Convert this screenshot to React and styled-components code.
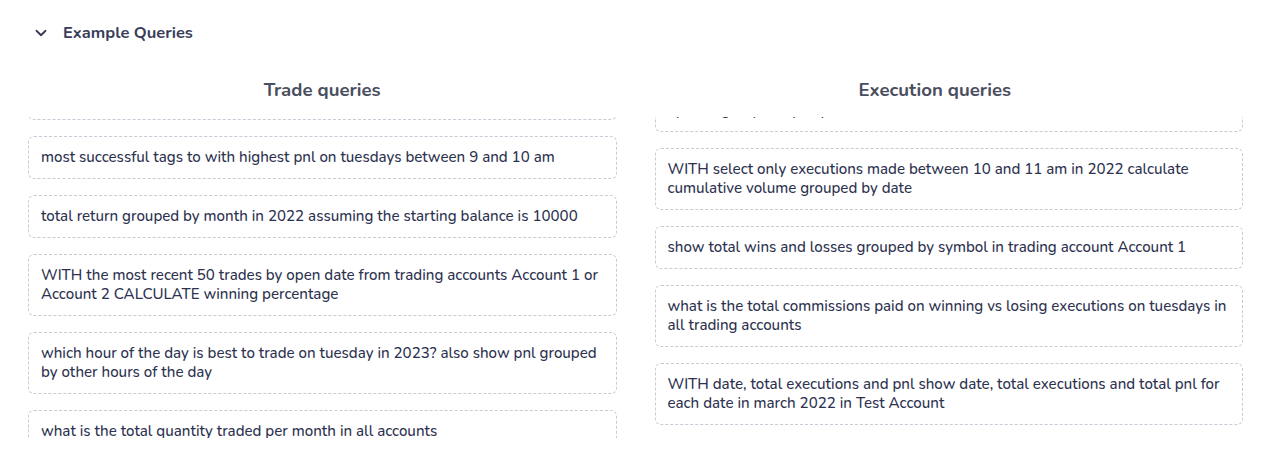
import { useLayoutEffect, useRef } from "react";
import styled, { createGlobalStyle } from "styled-components";
import { ChevronDown } from "lucide-react";

const GlobalStyle = createGlobalStyle`
  * { box-sizing: border-box; }
  body {
    margin: 0;
    background: #fff;
    font-family: "Nunito", "Open Sans", "Noto Sans", sans-serif;
    color: #2d3250;
  }
`;

const Page = styled.div`
  width: 1277px;
  height: 462px;
  padding: 19px 34px 0 28px;
  overflow: hidden;
`;

const Header = styled.button`
  display: flex;
  align-items: center;
  gap: 13px;
  padding: 0 0 0 4px;
  height: 28px;
  border: none;
  background: none;
  font: inherit;
  font-size: 16.5px;
  font-weight: 700;
  line-height: 24px;
  color: #393d5a;
  cursor: pointer;
`;

const Columns = styled.div`
  display: grid;
  grid-template-columns: 1fr 1fr;
  column-gap: 38px;
  margin-top: 31px;
`;

const Column = styled.div`
  display: flex;
  flex-direction: column;
  min-width: 0;
`;

const ColumnTitle = styled.h3`
  margin: 0;
  height: 39px;
  padding-right: ${({ $shift }) => $shift || 0}px;
  text-align: center;
  font-size: 18.6px;
  font-weight: 700;
  line-height: 24px;
  color: #4a4e5e;
`;

const List = styled.div`
  display: flex;
  flex-direction: column;
  gap: 16px;
  height: 321px;
  padding-bottom: 16px;
  overflow-y: auto;
  scrollbar-width: none;
  &::-webkit-scrollbar { display: none; }
`;

const QueryCard = styled.div`
  flex-shrink: 0;
  padding: 11px 12px;
  border: 1px dashed #c6cbd6;
  border-radius: 6px;
  font-size: 15.1px;
  font-weight: 500;
  line-height: 19px;
  color: #2d3250;
  cursor: pointer;
`;

const tradeQueries = [
  "show winning percentage grouped by day of the week in 2023",
  "average pnl grouped by setup in all trading accounts",
  "most successful tags to with highest pnl on tuesdays between 9 and 10 am",
  "total return grouped by month in 2022 assuming the starting balance is 10000",
  "WITH the most recent 50 trades by open date from trading accounts Account 1 or Account 2 CALCULATE winning percentage",
  "which hour of the day is best to trade on tuesday in 2023? also show pnl grouped by other hours of the day",
  "what is the total quantity traded per month in all accounts",
  "show average holding time for winning and losing trades",
];

const executionQueries = [
  "show total volume grouped by symbol in all accounts",
  "WITH executions from the past quarter calculate the average price paid per symbol grouped by day of week",
  "WITH select only executions made between 10 and 11 am in 2022 calculate cumulative volume grouped by date",
  "show total wins and losses grouped by symbol in trading account Account 1",
  "what is the total commissions paid on winning vs losing executions on tuesdays in all trading accounts",
  "WITH date, total executions and pnl show date, total executions and total pnl for each date in march 2022 in Test Account",
];

function QueryColumn({ title, queries, scroll, shift }) {
  const listRef = useRef(null);

  useLayoutEffect(() => {
    if (listRef.current) listRef.current.scrollTop = scroll;
  }, [scroll]);

  return (
    <Column>
      <ColumnTitle $shift={shift}>{title}</ColumnTitle>
      <List ref={listRef}>
        {queries.map((q) => (
          <QueryCard key={q}>{q}</QueryCard>
        ))}
      </List>
    </Column>
  );
}

export default function App() {
  return (
    <>
      <GlobalStyle />
      <Page>
        <Header>
          <ChevronDown size={18} strokeWidth={2.5} color="#393d5a" />
          Example Queries
        </Header>
        <Columns>
          <QueryColumn title="Trade queries" queries={tradeQueries} scroll={99} />
          <QueryColumn
            title="Execution queries"
            queries={executionQueries}
            scroll={106}
            shift={28}
          />
        </Columns>
      </Page>
    </>
  );
}
